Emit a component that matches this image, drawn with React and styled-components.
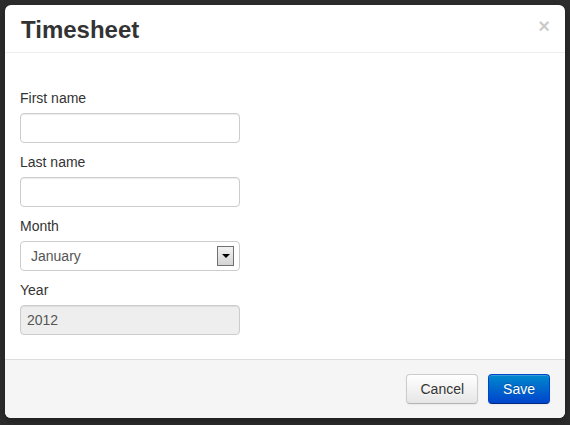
import React from "react";
import styled, { createGlobalStyle } from "styled-components";

const GlobalStyle = createGlobalStyle`
  html, body {
    margin: 0;
    padding: 0;
    background: #2c2c2c;
  }
  body {
    font-family: "Liberation Sans", Arial, sans-serif;
    font-size: 14px;
    color: #333;
  }
`;

const Backdrop = styled.div`
  width: 570px;
  height: 425px;
  padding: 5px;
  box-sizing: border-box;
`;

const Modal = styled.div`
  width: 560px;
  height: 413px;
  background: #fff;
  border-radius: 6px;
  display: flex;
  flex-direction: column;
  overflow: hidden;
  box-shadow: 0 3px 7px rgba(0, 0, 0, 0.3);
`;

const Header = styled.div`
  display: flex;
  align-items: center;
  justify-content: space-between;
  height: 47px;
  padding: 0 15px 0 16px;
  border-bottom: 1px solid #eee;
`;

const Title = styled.h3`
  margin: 2px 0 0;
  font-size: 24px;
  font-weight: bold;
  line-height: 30px;
  color: #333;
`;

const Close = styled.button`
  border: 0;
  background: none;
  padding: 0;
  margin-top: -6px;
  font-family: "Liberation Sans", Arial, sans-serif;
  font-size: 20px;
  font-weight: bold;
  line-height: 20px;
  color: #000;
  opacity: 0.2;
  cursor: pointer;
`;

const Body = styled.div`
  flex: 1;
  padding: 35px 15px 15px;
`;

const Group = styled.div`
  display: flex;
  flex-direction: column;
  margin-bottom: 9px;
  &:last-child {
    margin-bottom: 0;
  }
`;

const Label = styled.label`
  display: block;
  line-height: 20px;
  margin-bottom: 5px;
  color: #333;
`;

const Input = styled.input`
  box-sizing: border-box;
  width: 220px;
  height: 30px;
  padding: 4px 6px;
  border: 1px solid #ccc;
  border-radius: 4px;
  font-family: inherit;
  font-size: 14px;
  color: #555;
  background: ${(p) => (p.disabled ? "#eee" : "#fff")};
  box-shadow: inset 0 1px 1px rgba(0, 0, 0, 0.075);
  outline: none;
`;

const Select = styled.div`
  box-sizing: border-box;
  width: 220px;
  height: 30px;
  display: flex;
  align-items: center;
  justify-content: space-between;
  padding: 0 5px 0 10px;
  border: 1px solid #ccc;
  border-radius: 4px;
  background: #fff;
  color: #555;
`;

const SelectArrow = styled.span`
  box-sizing: border-box;
  width: 17px;
  height: 20px;
  border: 1px solid #707070;
  background: linear-gradient(#f2f2f2, #d4d4d4);
  display: flex;
  align-items: center;
  justify-content: center;
  &::after {
    content: "";
    border-left: 4px solid transparent;
    border-right: 4px solid transparent;
    border-top: 4px solid #000;
  }
`;

const Footer = styled.div`
  display: flex;
  justify-content: flex-end;
  gap: 10px;
  padding: 14px 15px 14px;
  background: #f5f5f5;
  border-top: 1px solid #ddd;
`;

const Button = styled.button`
  height: 30px;
  padding: 0 ${(p) => (p.primary ? "14px" : "13px")};
  border-radius: 4px;
  font-family: inherit;
  font-size: 14px;
  line-height: 20px;
  cursor: pointer;
  color: ${(p) => (p.primary ? "#fff" : "#333")};
  border: 1px solid ${(p) => (p.primary ? "#0044cc" : "#ccc")};
  border-bottom-color: ${(p) => (p.primary ? "#002a80" : "#b3b3b3")};
  background: ${(p) =>
    p.primary
      ? "linear-gradient(#0088cc, #0044cc)"
      : "linear-gradient(#ffffff, #e6e6e6)"};
  text-shadow: ${(p) =>
    p.primary ? "0 -1px 0 rgba(0,0,0,0.25)" : "0 1px 1px rgba(255,255,255,0.75)"};
  box-shadow: inset 0 1px 0 rgba(255, 255, 255, 0.2), 0 1px 2px rgba(0, 0, 0, 0.05);
`;

export default function App() {
  return (
    <>
      <GlobalStyle />
      <Backdrop>
        <Modal>
          <Header>
            <Title>Timesheet</Title>
            <Close>×</Close>
          </Header>
          <Body>
            <Group>
              <Label>First name</Label>
              <Input type="text" />
            </Group>
            <Group>
              <Label>Last name</Label>
              <Input type="text" />
            </Group>
            <Group>
              <Label>Month</Label>
              <Select>
                <span>January</span>
                <SelectArrow />
              </Select>
            </Group>
            <Group>
              <Label>Year</Label>
              <Input type="text" value="2012" disabled readOnly />
            </Group>
          </Body>
          <Footer>
            <Button>Cancel</Button>
            <Button primary>Save</Button>
          </Footer>
        </Modal>
      </Backdrop>
    </>
  );
}
